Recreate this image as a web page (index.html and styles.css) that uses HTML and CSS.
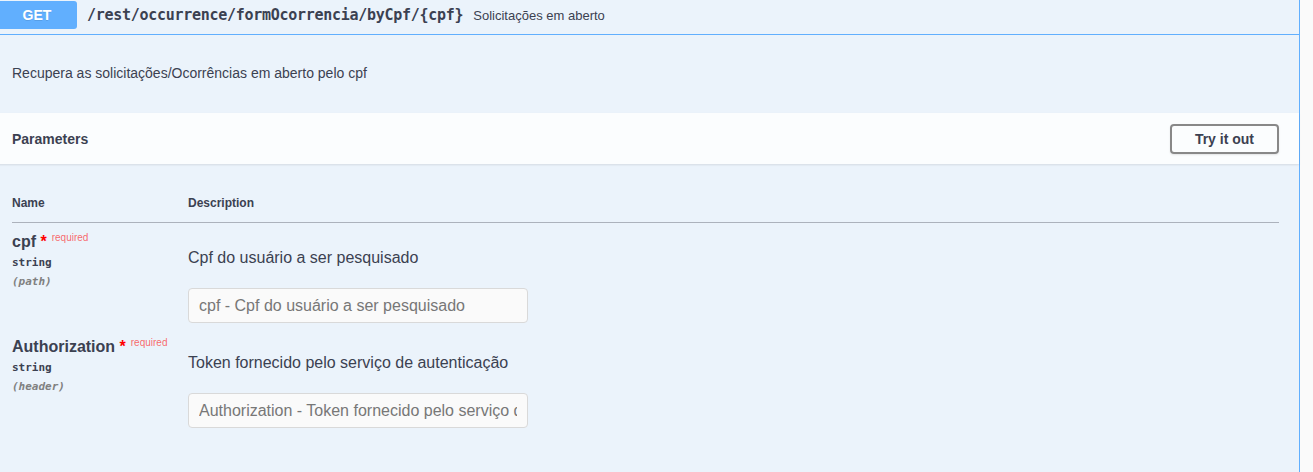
FILE: index.html
```html
<!DOCTYPE html>
<html lang="pt-BR">
<head>
    <meta charset="UTF-8">
    <meta name="viewport" content="width=device-width, initial-scale=1.0">
    <title>byCpf - Swagger UI</title>
    <link rel="stylesheet" href="styles.css">
</head>
<body>
    <div class="opblock opblock-get">
        <div class="opblock-summary">
            <span class="opblock-summary-method">GET</span>
            <span class="opblock-summary-path">/rest/occurrence/formOcorrencia/byCpf/{cpf}</span>
            <span class="opblock-summary-description">Solicitações em aberto</span>
        </div>

        <div class="opblock-description-wrapper">
            <p>Recupera as solicitações/Ocorrências em aberto pelo cpf</p>
        </div>

        <div class="opblock-section-header">
            <h4 class="opblock-title">Parameters</h4>
            <button class="btn try-out">Try it out</button>
        </div>

        <div class="table-container">
            <table class="parameters">
                <thead>
                    <tr>
                        <th class="col-name">Name</th>
                        <th class="col-description">Description</th>
                    </tr>
                </thead>
                <tbody>
                    <tr>
                        <td class="col-name">
                            <div class="parameter-name required">cpf<span>&nbsp;*</span><sup>required</sup></div>
                            <div class="parameter-type">string</div>
                            <div class="parameter-in">(path)</div>
                        </td>
                        <td class="col-description">
                            <p>Cpf do usuário a ser pesquisado</p>
                            <input type="text" class="param-input" placeholder="cpf - Cpf do usuário a ser pesquisado">
                        </td>
                    </tr>
                    <tr>
                        <td class="col-name">
                            <div class="parameter-name required">Authorization<span>&nbsp;*</span><sup>required</sup></div>
                            <div class="parameter-type">string</div>
                            <div class="parameter-in">(header)</div>
                        </td>
                        <td class="col-description">
                            <p>Token fornecido pelo serviço de autenticação</p>
                            <input type="text" class="param-input" placeholder="Authorization - Token fornecido pelo serviço de autenticação">
                        </td>
                    </tr>
                </tbody>
            </table>
        </div>
    </div>
</body>
</html>
```

FILE: styles.css
```css
body {
    margin: 0;
    background: #fafafa;
    font-family: "Liberation Sans", Arial, sans-serif;
    color: #3b4151;
    height: 472px;
    overflow: hidden;
}

.opblock {
    box-sizing: border-box;
    width: 1309px;
    min-height: 520px;
    margin: -5px 0 0 -9px;
    border: 1px solid #61affe;
    border-radius: 4px;
    background: #ebf3fb;
}

.opblock-summary {
    display: flex;
    align-items: center;
    padding: 5px;
    border-bottom: 1px solid #61affe;
}

.opblock-summary-method {
    min-width: 80px;
    padding: 6px 0;
    font-size: 14px;
    line-height: 16px;
    font-weight: 700;
    text-align: center;
    color: #fff;
    background: #61affe;
    border-radius: 3px;
    text-shadow: 0 1px 0 rgba(0, 0, 0, 0.1);
}

.opblock-summary-path {
    padding: 0 10px;
    font-family: "DejaVu Sans Mono", monospace;
    font-size: 15px;
    letter-spacing: -0.28px;
    font-weight: 700;
    color: #3b4151;
}

.opblock-summary-description {
    font-size: 13px;
    color: #3b4151;
}

.opblock-description-wrapper {
    padding: 15px 20px 16px;
    font-size: 14px;
}

.opblock-description-wrapper p {
    margin: 14px 0;
    line-height: 19px;
}

.opblock-section-header {
    box-sizing: border-box;
    min-height: 51px;
    display: flex;
    align-items: center;
    justify-content: space-between;
    padding: 8px 20px;
    background: rgba(255, 255, 255, 0.8);
    box-shadow: 0 1px 2px rgba(0, 0, 0, 0.1);
}

.opblock-title {
    margin: 0;
    font-size: 14px;
    font-weight: 700;
}

.btn.try-out {
    padding: 5px 23px;
    font-family: "Liberation Sans", Arial, sans-serif;
    font-size: 14px;
    line-height: 16px;
    font-weight: 700;
    color: #3b4151;
    background: transparent;
    border: 2px solid #888;
    border-radius: 4px;
    box-shadow: 0 1px 2px rgba(0, 0, 0, 0.1);
    cursor: pointer;
}

.table-container {
    padding: 20px;
}

.parameters {
    width: 100%;
    border-collapse: collapse;
}

.parameters th {
    padding: 12px 0;
    font-size: 12px;
    line-height: 14px;
    font-weight: 700;
    text-align: left;
    border-bottom: 1px solid rgba(59, 65, 81, 0.2);
}

.parameters td {
    padding: 10px 0 0;
    vertical-align: top;
}

.parameters .col-name {
    width: 176px;
}

.parameters td.col-name {
    padding: 10px 0;
}

.parameter-name {
    font-size: 16px;
    line-height: 17px;
    font-weight: 700;
}

.parameter-name span {
    color: red;
}

.parameter-name sup {
    position: relative;
    top: -4px;
    padding: 5px;
    font-size: 10px;
    font-weight: 400;
    vertical-align: top;
    color: rgba(255, 0, 0, 0.6);
}

.parameter-type {
    padding: 5px 0 4px;
    font-family: "DejaVu Sans Mono", monospace;
    font-size: 11px;
    line-height: 16px;
    font-weight: 700;
}

.parameter-in {
    font-family: "DejaVu Sans Mono", monospace;
    font-size: 11px;
    line-height: 14px;
    font-weight: 700;
    font-style: italic;
    color: #808080;
}

.col-description p {
    margin: 15px 0 20px;
    font-size: 16px;
    line-height: 20px;
}

.param-input {
    box-sizing: border-box;
    display: block;
    width: 340px;
    height: 35px;
    margin: 5px 0;
    padding: 8px 10px;
    font-family: "Liberation Sans", Arial, sans-serif;
    font-size: 16px;
    color: #3b4151;
    background: #fafafa;
    border: 1px solid #d9d9d9;
    border-radius: 4px;
    outline: none;
}

.param-input::placeholder {
    color: #777;
}
```
